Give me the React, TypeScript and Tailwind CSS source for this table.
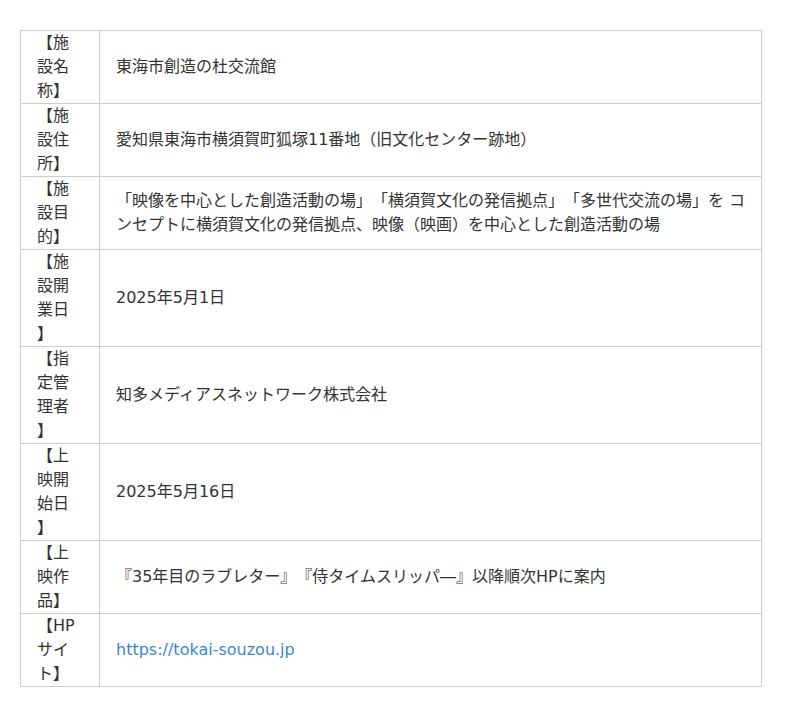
export default function App() {
  const rows: { label: string; value: React.ReactNode }[] = [
    { label: "【施設名称】", value: "東海市創造の杜交流館" },
    { label: "【施設住所】", value: "愛知県東海市横須賀町狐塚11番地（旧文化センター跡地）" },
    {
      label: "【施設目的】",
      value:
        "「映像を中心とした創造活動の場」「横須賀文化の発信拠点」「多世代交流の場」を コンセプトに横須賀文化の発信拠点、映像（映画）を中心とした創造活動の場",
    },
    { label: "【施設開業日】", value: "2025年5月1日" },
    { label: "【指定管理者】", value: "知多メディアスネットワーク株式会社" },
    { label: "【上映開始日】", value: "2025年5月16日" },
    { label: "【上映作品】", value: "『35年目のラブレター』『侍タイムスリッパ―』以降順次HPに案内" },
    {
      label: "【HPサイト】",
      value: <a className="text-[#3b87c6]" href="#">https://tokai-souzou.jp</a>,
    },
  ];
  return (
    <div
      className="bg-white min-h-[717px] pt-[30px] pl-[20px] text-[#333] text-[16px] leading-[24px] [text-spacing-trim:space-all]"
      style={{ fontFamily: '"DejaVu Sans", "Noto Sans CJK JP", sans-serif' }}
    >
      <table className="border-collapse w-[742px]">
        <tbody>
          {rows.map((r, i) => (
            <tr key={i}>
              <td className="border border-[#cccccc] px-[16px] py-0 w-[79px] align-middle break-all [line-break:anywhere]">{r.label}</td>
              <td className="border border-[#cccccc] pl-[16px] pr-[12px] py-0 align-middle">{r.value}</td>
            </tr>
          ))}
        </tbody>
      </table>
    </div>
  );
}
